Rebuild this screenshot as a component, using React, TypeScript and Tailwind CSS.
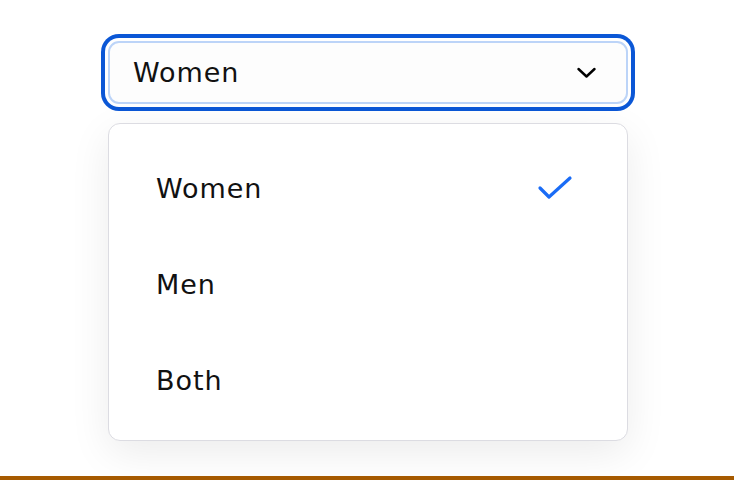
import React from "react";

export default function App() {
  const items = ["Women", "Men", "Both"];
  const selected = "Women";
  return (
    <div
      className="w-full h-[480px] flex flex-col bg-white text-[#111]"
      style={{ fontFamily: '"DejaVu Sans", "Noto Sans", sans-serif' }}
    >
      <div className="flex-1 pt-[41px]">
        <button
          type="button"
          className="ml-[108px] w-[520px] h-[63px] flex items-center justify-between pl-[23px] pr-[30px] rounded-[11px] border-2 border-[#bcd4f8] bg-[#fdfdfd] shadow-[0_0_0_3px_#ffffff,0_0_0_7px_#0b57d6]"
        >
          <span className="text-[27px] leading-none tracking-[0.035em]">Women</span>
          <svg width="19" height="12" viewBox="0 0 19 12" fill="none">
            <path d="M1.5 2 L9.5 9.5 L17.5 2" stroke="#000" strokeWidth="2.4" strokeLinecap="round" strokeLinejoin="round" />
          </svg>
        </button>
        <div className="ml-[108px] mt-[19px] w-[520px] rounded-[12px] border border-[#dcdce2] bg-white pt-4 pb-3 shadow-[0_12px_40px_rgba(0,0,0,0.08)]">
          {items.map((it) => (
            <div key={it} className="h-[96px] flex items-center justify-between pl-[47px] pr-[54px]">
              <span className="text-[27px] leading-none tracking-[0.035em]">{it}</span>
              {it === selected && (
                <svg width="36" height="26" viewBox="0 0 36 26" fill="none">
                  <path d="M3 13 L12 22 L33 3" stroke="#1a6cf6" strokeWidth="3.2" strokeLinecap="round" strokeLinejoin="round" />
                </svg>
              )}
            </div>
          ))}
        </div>
      </div>
      <div className="h-[4px] w-full bg-[#a65a00]" />
    </div>
  );
}
